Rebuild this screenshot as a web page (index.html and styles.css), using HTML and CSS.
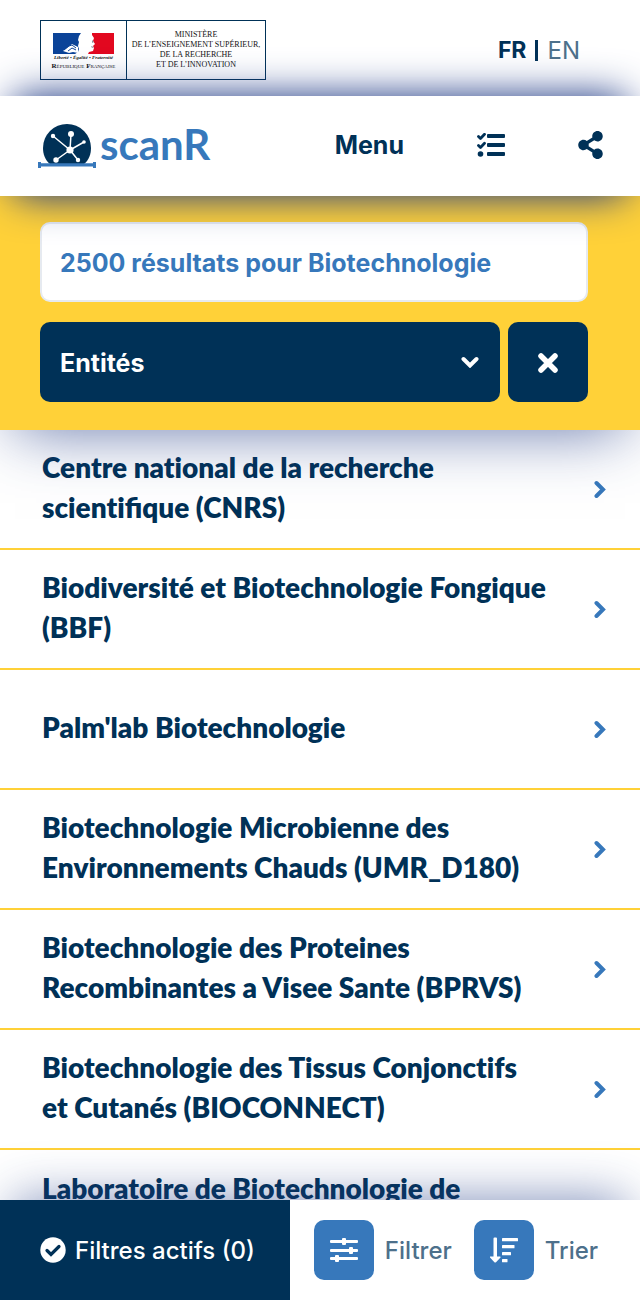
FILE: index.html
```html
<!DOCTYPE html>
<html lang="fr">
<head>
<meta charset="utf-8">
<meta name="viewport" content="width=device-width, initial-scale=1">
<title>scanR – Biotechnologie</title>
<link rel="stylesheet" href="styles.css">
</head>
<body>
<div class="app">
  <header class="topbar">
    <a class="ministry" href="#">
      <span class="republic">
        <svg class="flag" viewBox="0 0 61 21" aria-hidden="true">
          <path fill="#fff" d="M0 0h61v21H0z"/>
          <path fill="#0b4398" d="M0 0h28l-2 3-1 4 1 2-1 4 1 3-1 3-3 2H0z"/>
          <path fill="#e2081f" d="M39 0h22v21H35l1-2 4-1 1-3-1-2 2-2-2-3 1-3-2-3z"/>
          <path fill="#fff" d="M10 18l5-4 4-3 6 3v6l-5-1-4 1z"/>
          <path fill="none" stroke="#0b4398" d="M11 17l5-4 3-1 4 3M15 18l4-3 4 2"/>
          <path fill="#8a8f9c" d="M39 7l2 2-2 1zM38 13l3 1-2 1z"/>
        </svg>
        <span class="motto">Liberté • Égalité • Fraternité</span>
        <span class="country"><b>R</b>épublique <b>F</b>rançaise</span>
      </span>
      <span class="ministry-name">MINISTÈRE<br>DE L’ENSEIGNEMENT SUPÉRIEUR,<br>DE LA RECHERCHE<br>ET DE L’INNOVATION</span>
    </a>
    <nav class="langs" aria-label="Langue">
      <a class="lang lang-active" href="#">FR</a>
      <span class="lang-sep"></span>
      <a class="lang" href="#">EN</a>
    </nav>
  </header>

  <nav class="mainnav" aria-label="Navigation principale">
    <a class="brand" href="#">
      <svg class="brand-mark" viewBox="0 0 60 46" aria-hidden="true">
        <path fill="#003157" d="M12 41C7 37 5 31 5 25a24 24 0 0 1 48 0c0 6-2 12-7 16z"/>
        <g stroke="#fff" stroke-width="1.500"><path d="M32 27L15 13M32 27l1-16M32 27l14-8M32 27L18 37M32 27l8 10"/></g>
        <g fill="#fff"><circle cx="32" cy="27" r="3.600"/><circle cx="15" cy="13" r="2.200"/><circle cx="33" cy="11" r="3"/><circle cx="46" cy="19" r="1.800"/><circle cx="18" cy="37" r="2.700"/><circle cx="40" cy="37" r="2.200"/></g>
        <path fill="#3778bb" d="M0 39h3v1.300h52V39h3v6h-3v-1.500H3V45H0z"/>
      </svg>
      <span class="brand-name">scanR</span>
    </a>
    <button class="menu-btn" type="button">Menu</button>
    <button class="icon-btn" type="button" aria-label="Liste">
      <svg width="28" height="24" viewBox="0 0 28 24" aria-hidden="true">
        <g fill="currentColor"><rect x="10" y="1" width="18" height="4" rx="1"/><rect x="10" y="10" width="18" height="4" rx="1"/><rect x="10" y="19" width="18" height="4" rx="1"/><circle cx="3.500" cy="21" r="2.800"/></g>
        <path d="M1.500 3.500l2 2L7.500 1.300M1.500 12.500l2 2L7.500 10.300" fill="none" stroke="currentColor" stroke-width="2.800" stroke-linecap="round" stroke-linejoin="round"/>
      </svg>
    </button>
    <button class="icon-btn" type="button" aria-label="Partager">
      <svg width="25" height="28" viewBox="0 0 448 512" aria-hidden="true"><path fill="currentColor" d="M352 320c-22.600 0-43.400 7.800-59.800 20.900l-102.500-64.100a96.600 96.600 0 0 0 0-41.600l102.500-64.100C308.600 184.200 329.400 192 352 192c53 0 96-43 96-96S405 0 352 0s-96 43-96 96c0 7.200.8 14.100 2.300 20.800l-102.500 64.100C139.400 167.800 118.600 160 96 160c-53 0-96 43-96 96s43 96 96 96c22.600 0 43.400-7.800 59.800-20.900l102.500 64.100A96.300 96.300 0 0 0 256 416c0 53 43 96 96 96s96-43 96-96-43-96-96-96z"/></svg>
    </button>
  </nav>

  <form class="search">
    <input class="query" type="text" aria-label="Recherche" value="2500 résultats pour Biotechnologie">
    <div class="scope-row">
      <div class="scope">
        <select class="scope-select" aria-label="Type de résultats"><option>Entités</option></select>
        <svg class="scope-arrow" width="18" height="12" viewBox="0 0 18 12" aria-hidden="true"><path d="M2.500 3l6.500 6.500L15.500 3" fill="none" stroke="currentColor" stroke-width="4" stroke-linecap="round"/></svg>
      </div>
      <button class="clear" type="button" aria-label="Effacer">
        <svg width="20" height="22" viewBox="0 0 20 22" aria-hidden="true"><path d="M3 5l14 14M17 5L3 19" fill="none" stroke="currentColor" stroke-width="5.500" stroke-linecap="round"/></svg>
      </button>
    </div>
  </form>

  <main class="results">
    <a class="result" href="#"><span class="result-name">Centre nat&zwnj;ional de la recherche scient&zwnj;ifique (CNRS)</span><svg class="chevron" viewBox="0 0 12 18"><path d="M2.500 3L9 9.500 2.500 16"/></svg></a>
    <a class="result" href="#"><span class="result-name">Biodiversité et Biotechnologie Fongique (BBF)</span><svg class="chevron" viewBox="0 0 12 18"><path d="M2.500 3L9 9.500 2.500 16"/></svg></a>
    <a class="result" href="#"><span class="result-name">Palm'lab Biotechnologie</span><svg class="chevron" viewBox="0 0 12 18"><path d="M2.500 3L9 9.500 2.500 16"/></svg></a>
    <a class="result" href="#"><span class="result-name">Biotechnologie Microbienne des Environnements Chauds (UMR_D180)</span><svg class="chevron" viewBox="0 0 12 18"><path d="M2.500 3L9 9.500 2.500 16"/></svg></a>
    <a class="result" href="#"><span class="result-name">Biotechnologie des Proteines Recombinantes a Visee Sante (BPRVS)</span><svg class="chevron" viewBox="0 0 12 18"><path d="M2.500 3L9 9.500 2.500 16"/></svg></a>
    <a class="result" href="#"><span class="result-name">Biotechnologie des Tissus Conjonct&zwnj;ifs et Cutanés (BIOCONNECT)</span><svg class="chevron" viewBox="0 0 12 18"><path d="M2.500 3L9 9.500 2.500 16"/></svg></a>
    <a class="result" href="#"><span class="result-name">Laboratoire de Biotechnologie de</span></a>
  </main>

  <footer class="actions">
    <button class="active-filters" type="button">
      <svg width="26" height="26" viewBox="0 0 26 26" aria-hidden="true"><circle cx="13" cy="13" r="12.700" fill="#fff"/><path d="M7 13.500l4 4 8-8" fill="none" stroke="#003157" stroke-width="3.200" stroke-linecap="round"/></svg>
      Filtres actifs (0)
    </button>
    <div class="tools">
      <button class="tool" type="button">
        <span class="tool-icon"><svg width="28" height="24" viewBox="0 0 28 24" aria-hidden="true"><g fill="#fff"><rect y="2" width="28" height="3" rx="1"/><rect y="11" width="28" height="3" rx="1"/><rect y="19" width="28" height="3" rx="1"/><rect x="12" width="4" height="7" rx="1"/><rect x="19" y="9" width="4" height="7" rx="1"/><rect x="5" y="17" width="4" height="7" rx="1"/></g></svg></span>
        Filtrer
      </button>
      <button class="tool" type="button">
        <span class="tool-icon"><svg width="28" height="26" viewBox="0 0 28 26" aria-hidden="true"><g fill="#fff"><path d="M3.500 1.500q0-1 1-1h1.500q1 0 1 1V19.500h3q1 0 .5 1L6 25.200q-.8.800-1.600 0L0 20.500q-.5-1 .5-1h3z"/><rect x="12" y="1" width="16" height="3.300" rx=".6"/><rect x="12" y="8" width="12.500" height="3.300" rx=".6"/><rect x="12" y="15" width="9" height="3.300" rx=".6"/><rect x="12" y="22" width="5.500" height="3.300" rx=".6"/></g></svg></span>
        Trier
      </button>
    </div>
  </footer>
</div>
</body>
</html>
```
FILE: styles.css
```css
:root {
  --navy: #003157;
  --blue: #3778bb;
  --slate: #4d708b;
  --yellow: #ffd138;
}
* { box-sizing: border-box; }
body {
  margin: 0;
  font-family: Inter, "Liberation Sans", sans-serif;
  font-size: 24px;
  color: var(--navy);
  background: #fff;
}
a { color: inherit; text-decoration: none; }
button {
  border: 0;
  padding: 0;
  background: none;
  font: inherit;
  color: inherit;
  cursor: pointer;
}
svg { display: block; flex: none; }
.app {
  display: flex;
  flex-direction: column;
  height: 100vh;
}

.topbar {
  flex: none;
  display: flex;
  justify-content: space-between;
  align-items: flex-start;
  padding: 20px 60px 16px 40px;
}
.ministry {
  display: flex;
  height: 60px;
  width: 226px;
  border: 1px solid var(--navy);
  font-family: "Liberation Serif", serif;
  color: #111;
}
.republic {
  width: 86px;
  padding-top: 12px;
  border-right: 1px solid var(--navy);
  display: flex;
  flex-direction: column;
  align-items: center;
  white-space: nowrap;
}
.flag { width: 61px; height: 21px; }
.motto { font-size: 5px; line-height: 8px; font-style: italic; font-weight: 700; }
.country { font-size: 7px; line-height: 8px; font-variant: small-caps; }
.ministry-name {
  flex: 1;
  padding-top: 9px;
  font-size: 8px;
  line-height: 10px;
  text-align: center;
  white-space: nowrap;
}
.langs {
  display: flex;
  align-items: center;
  gap: 9px;
  height: 60px;
}
.lang { color: var(--slate); }
.lang-active { color: var(--navy); font-size: 23px; font-weight: 700; }
.lang-sep { width: 3px; height: 21px; background: var(--navy); }

.mainnav {
  position: relative;
  z-index: 3;
  flex: none;
  display: flex;
  align-items: center;
  height: 100px;
  padding: 0 37px 2px 38px;
  background: #fff;
  box-shadow: 0 15px 40px -15px #233d87, 0 -15px 40px -15px #233d87;
}
.brand { display: flex; align-items: center; gap: 2px; margin-right: auto; padding-top: 2px; }
.brand-mark { width: 60px; height: 46px; }
.brand-name {
  font-family: Lato, sans-serif;
  font-weight: 700;
  font-size: 42px;
  line-height: 46px;
  padding-bottom: 5px;
  color: var(--blue);
}
.menu-btn { font-size: 25px; font-weight: 700; }
.icon-btn { margin-left: 73px; }

.search {
  position: relative;
  z-index: 2;
  flex: none;
  display: flex;
  flex-direction: column;
  gap: 20px;
  padding: 26px 52px 28px 40px;
  background: var(--yellow);
  box-shadow: 0 15px 60px -15px rgba(35, 61, 135, .7);
}
.query {
  width: 100%;
  height: 80px;
  padding: 2px 18px 0;
  border: 2px solid #e6eaf0;
  border-radius: 10px;
  background: #fff;
  font: 700 25px Inter, sans-serif;
  color: var(--blue);
}
.scope-row { display: flex; gap: 8px; }
.scope {
  flex: 1;
  display: grid;
  align-items: center;
  color: #fff;
}
.scope-select, .scope-arrow { grid-area: 1 / 1; }
.scope-select {
  appearance: none;
  width: 100%;
  height: 80px;
  padding: 2px 20px 0;
  border: 0;
  border-radius: 10px;
  background: var(--navy);
  color: #fff;
  font: 700 25px Inter, sans-serif;
}
.scope-arrow { justify-self: end; margin-right: 21px; pointer-events: none; }
.clear {
  display: grid;
  place-items: center;
  width: 80px;
  height: 80px;
  border-radius: 10px;
  background: var(--navy);
  color: #fff;
}

.results { flex: 1; min-height: 0; overflow: hidden; }
.result {
  display: flex;
  justify-content: space-between;
  gap: 46px;
  height: 120px;
  padding: 18px 34px 22px 42px;
  border-bottom: 2px solid var(--yellow);
  font: 800 28px/40px Lato, sans-serif;
}
.result-name, .chevron { align-self: center; }
.result:last-child .result-name { align-self: flex-start; }
.chevron {
  width: 12px;
  height: 18px;
  margin-top: 4px;
  fill: none;
  stroke: var(--blue);
  stroke-width: 4;
  stroke-linecap: round;
}

.actions {
  position: relative;
  z-index: 1;
  flex: none;
  display: flex;
  height: 100px;
  background: #fff;
  box-shadow: 0 -15px 50px -15px rgba(35, 61, 135, .6);
}
.active-filters {
  display: flex;
  align-items: center;
  gap: 9px;
  padding: 0 35px 0 40px;
  background: var(--navy);
  color: #fff;
  font-weight: 500;
  white-space: nowrap;
}
.tools {
  flex: 1;
  display: flex;
  align-items: center;
  gap: 22px;
  padding-left: 24px;
}
.tool { display: flex; align-items: center; gap: 11px; color: var(--slate); font-weight: 500; }
.tool-icon {
  display: grid;
  place-items: center;
  width: 60px;
  height: 60px;
  border-radius: 10px;
  background: var(--blue);
}
```
